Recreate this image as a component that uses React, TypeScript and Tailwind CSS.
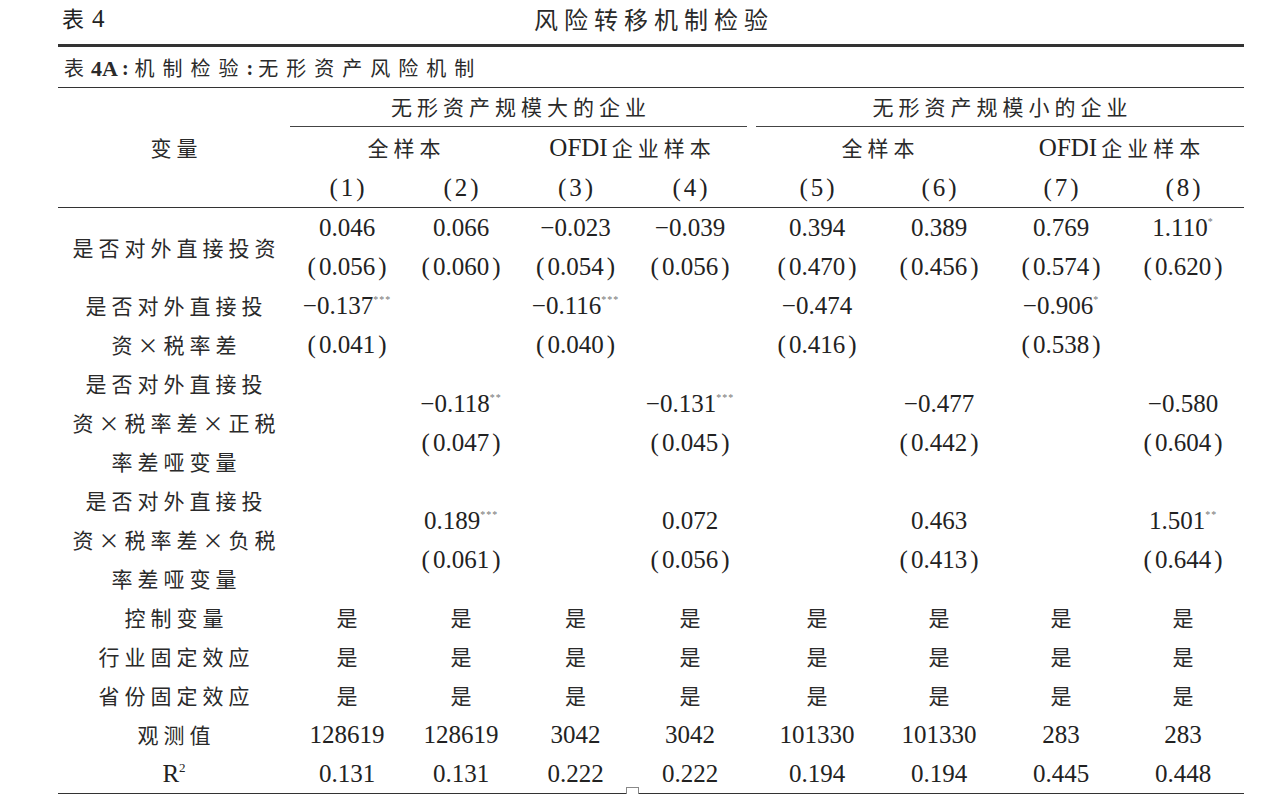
import React from 'react';

const SERIF = "font-['Liberation_Serif','Noto_Sans_CJK_SC',serif]";
const CJK = "font-['Noto_Sans_CJK_SC','Noto_Sans_CJK_JP',sans-serif]";

type Row = { label: string[]; values: string[][] };

const rows: Row[] = [
  {
    label: ['是否对外直接投资'],
    values: [
      ['0.046', '(0.056)'], ['0.066', '(0.060)'], ['−0.023', '(0.054)'], ['−0.039', '(0.056)'],
      ['0.394', '(0.470)'], ['0.389', '(0.456)'], ['0.769', '(0.574)'], ['1.110*', '(0.620)'],
    ],
  },
  {
    label: ['是否对外直接投', '资×税率差'],
    values: [
      ['−0.137***', '(0.041)'], [], ['−0.116***', '(0.040)'], [],
      ['−0.474', '(0.416)'], [], ['−0.906*', '(0.538)'], [],
    ],
  },
  {
    label: ['是否对外直接投', '资×税率差×正税', '率差哑变量'],
    values: [
      [], ['−0.118**', '(0.047)'], [], ['−0.131***', '(0.045)'],
      [], ['−0.477', '(0.442)'], [], ['−0.580', '(0.604)'],
    ],
  },
  {
    label: ['是否对外直接投', '资×税率差×负税', '率差哑变量'],
    values: [
      [], ['0.189***', '(0.061)'], [], ['0.072', '(0.056)'],
      [], ['0.463', '(0.413)'], [], ['1.501**', '(0.644)'],
    ],
  },
  { label: ['控制变量'], values: Array(8).fill(['是']) },
  { label: ['行业固定效应'], values: Array(8).fill(['是']) },
  { label: ['省份固定效应'], values: Array(8).fill(['是']) },
  {
    label: ['观测值'],
    values: [['128619'], ['128619'], ['3042'], ['3042'], ['101330'], ['101330'], ['283'], ['283']],
  },
  {
    label: ['R²'],
    values: [['0.131'], ['0.131'], ['0.222'], ['0.222'], ['0.194'], ['0.194'], ['0.445'], ['0.448']],
  },
];

// one line of a value cell: coefficient with stars, standard error in parens, or 是
const Value = ({ text }: { text: string }) => {
  if (text === '是') {
    return <span className={`${CJK} text-[21px] text-[#2a2a2a]`}>是</span>;
  }
  if (text.startsWith('(')) {
    return (
      <span className={`${SERIF} text-[25px]`}>
        <span className="pl-[4px] pr-[3px]">(</span>
        {text.slice(1, -1)}
        <span className="pl-[3px] pr-[4px]">)</span>
      </span>
    );
  }
  const stars = text.match(/\*+$/)?.[0] ?? '';
  const num = stars ? text.slice(0, -stars.length) : text;
  return (
    <span className={`${SERIF} text-[25px]`}>
      {num}
      {stars && (
        <span className="relative -top-[11px] text-[10px] tracking-[1px] text-[#777]">{stars}</span>
      )}
    </span>
  );
};

const Label = ({ text }: { text: string }) => {
  if (text === 'R²') {
    return (
      <span className={`${SERIF} text-[25px]`}>
        R<span className="relative -top-[10px] text-[13px]">2</span>
      </span>
    );
  }
  return <span className={`${CJK} text-[21px] tracking-[5px] pl-[5px] text-[#2a2a2a]`}>{text}</span>;
};

const Paren = ({ n }: { n: number }) => (
  <span className={`${SERIF} text-[25px]`}>
    (<span className="px-[3px]">{n}</span>)
  </span>
);

const OfdiHead = () => (
  <span>
    <span className={`${SERIF} text-[25px]`}>OFDI</span>
    <span className={`${CJK} text-[21px] tracking-[5px] pl-[4px] text-[#2a2a2a]`}>企业样本</span>
  </span>
);

const headCjk = `${CJK} text-[21px] tracking-[5px] pl-[5px] text-[#2a2a2a]`;

export default function App() {
  return (
    <div className="w-[1282px] h-[794px] bg-white text-[#222] overflow-hidden relative">
      <div className="ml-[58px] w-[1186px]">
        {/* title */}
        <div className="grid grid-cols-[1fr_auto_1fr] items-center h-[44px] pb-[6px]">
          <div className="pl-[4px]">
            <span className={`${CJK} text-[22px]`}>表</span>
            <span className={`${SERIF} text-[25px] pl-[8px]`}>4</span>
          </div>
          <div className={`${CJK} text-[24px] tracking-[6px] pl-[6px] text-[#2a2a2a]`}>风险转移机制检验</div>
          <div />
        </div>
        <div className="border-t-[3px] border-[#333]" />
        <div className="h-[40px] flex items-center pl-[6px] pt-[2px] text-[#2a2a2a]">
          <span className={`${CJK} text-[20px]`}>表</span>
          <span className={`${SERIF} text-[22px] font-bold pl-[7px]`}>4A</span>
          <span className={`${SERIF} text-[20px] font-bold pl-[4px] pr-[6px]`}>:</span>
          <span className={`${CJK} text-[20px] tracking-[8px]`}>机制检验</span>
          <span className={`${SERIF} text-[20px] font-bold pr-[5px]`}>:</span>
          <span className={`${CJK} text-[20px] tracking-[8px]`}>无形资产风险机制</span>
        </div>

        <table className="table-fixed border-collapse w-[1186px] border-t border-b-[2px] border-[#333]">
          <colgroup>
            <col className="w-[232px]" />
            <col className="w-[114px]" />
            <col className="w-[114px]" />
            <col className="w-[115px]" />
            <col className="w-[114px]" />
            <col className="w-[9px]" />
            <col className="w-[122px]" />
            <col className="w-[122px]" />
            <col className="w-[122px]" />
            <col className="w-[122px]" />
          </colgroup>
          <thead>
            <tr className="h-[39px]">
              <td rowSpan={3} className="p-0 text-center align-middle border-b border-[#333]">
                <span className={headCjk}>变量</span>
              </td>
              <td colSpan={4} className="p-0 text-center border-b border-[#444]">
                <span className={headCjk}>无形资产规模大的企业</span>
              </td>
              <td className="p-0" />
              <td colSpan={4} className="p-0 text-center border-b border-[#444]">
                <span className={headCjk}>无形资产规模小的企业</span>
              </td>
            </tr>
            <tr className="h-[41px]">
              <td colSpan={2} className="p-0 text-center">
                <span className={headCjk}>全样本</span>
              </td>
              <td colSpan={2} className="p-0 text-center">
                <OfdiHead />
              </td>
              <td className="p-0" />
              <td colSpan={2} className="p-0 text-center">
                <span className={headCjk}>全样本</span>
              </td>
              <td colSpan={2} className="p-0 text-center">
                <OfdiHead />
              </td>
            </tr>
            <tr className="h-[40px]">
              {[1, 2, 3, 4].map((n) => (
                <td key={n} className="p-0 text-center border-b border-[#333]">
                  <Paren n={n} />
                </td>
              ))}
              <td className="p-0 border-b border-[#333]" />
              {[5, 6, 7, 8].map((n) => (
                <td key={n} className="p-0 text-center border-b border-[#333]">
                  <Paren n={n} />
                </td>
              ))}
            </tr>
          </thead>
          <tbody>
            {rows.map((row, i) => {
              const cells = row.values.map((lines, j) => (
                <td key={j} className="p-0 text-center align-middle">
                  {lines.map((l, k) => (
                    <div key={k} className="h-[39px] leading-[39px] whitespace-nowrap">
                      <Value text={l} />
                    </div>
                  ))}
                </td>
              ));
              return (
                <tr key={i}>
                  <td className="p-0 text-center align-middle">
                    {row.label.map((l, k) => (
                      <div key={k} className="h-[39px] leading-[39px] whitespace-nowrap">
                        <Label text={l} />
                      </div>
                    ))}
                  </td>
                  {cells.slice(0, 4)}
                  <td className="p-0" />
                  {cells.slice(4)}
                </tr>
              );
            })}
          </tbody>
        </table>
      </div>
      {/* small page marker sitting on the bottom rule */}
      <div className="absolute left-[626px] top-[787px] w-[13px] h-[8px] bg-white border border-[#888]" />
    </div>
  );
}
